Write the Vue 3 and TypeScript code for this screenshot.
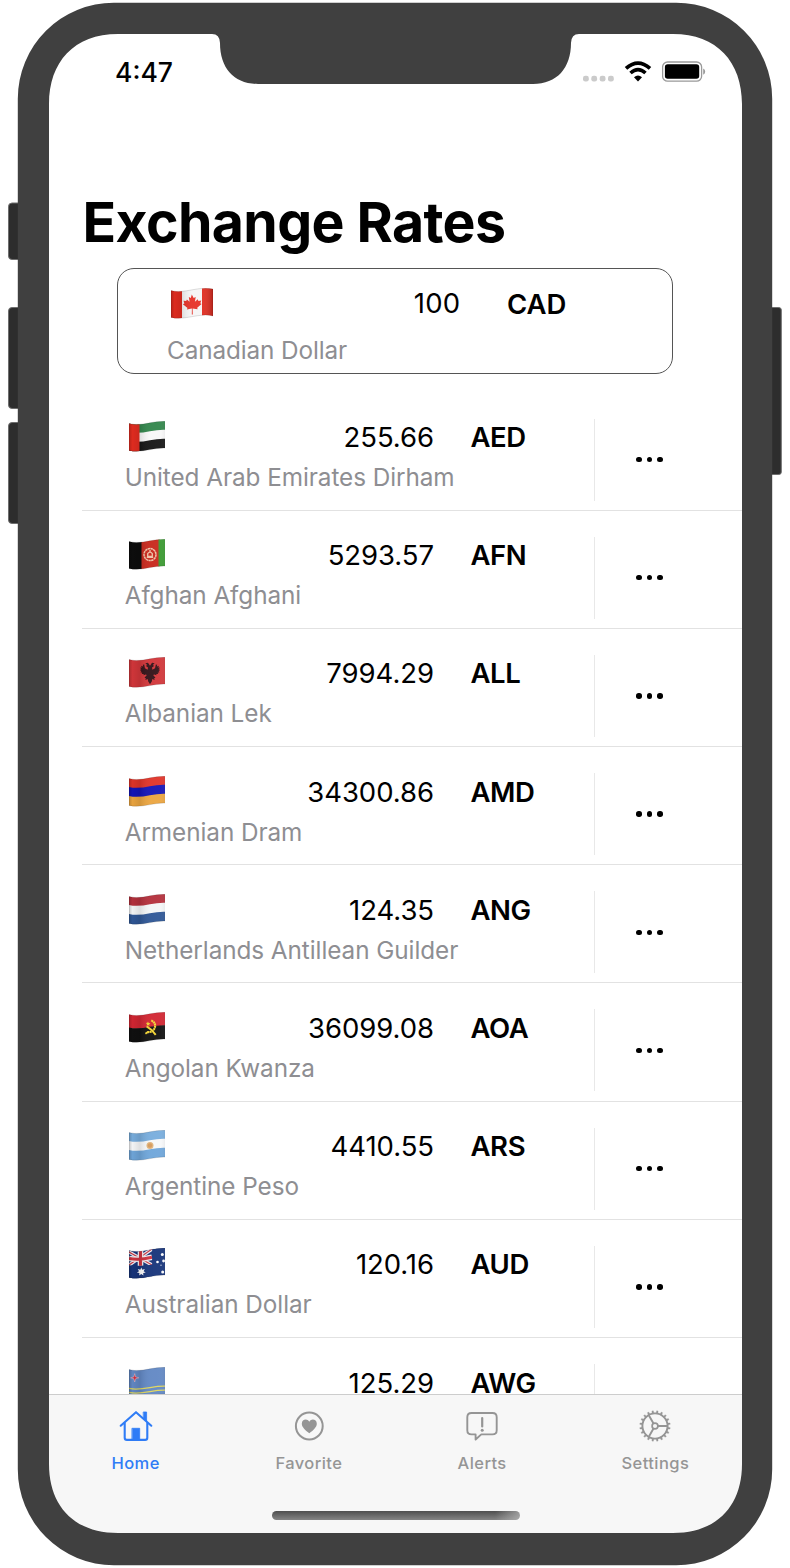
<script setup lang="ts">
interface Flag {
  bands?: [number, number, string][]
  columns?: [number, number, string][]
  emblem?: string
}
interface Rate {
  code: string
  name?: string
  amount: string
}

const flags: Record<string, Flag> = {
  CAD: { columns: [[0, 42, '#f6f6f6'], [0, 11, '#e02c20'], [31, 12, '#e02c20']], emblem: 'maple' },
  AED: { bands: [[0, 12, '#32864c'], [11, 21, '#f8f8f8'], [20, 33, '#161616']], columns: [[0, 10.5, '#e22c20']] },
  AFN: { columns: [[0, 13, '#0d0d0d'], [12.5, 18, '#c8281c'], [29.5, 13, '#3a9a30']], emblem: 'seal' },
  ALL: { columns: [[0, 43, '#d2363a']], emblem: 'eagle' },
  AMD: { bands: [[0, 12, '#e03429'], [11, 21, '#1414b8'], [20, 33, '#eba540']] },
  ANG: { bands: [[0, 12, '#b4303c'], [11, 21, '#f4f6f7'], [20, 33, '#2f5796']] },
  AOA: { bands: [[0, 16, '#d22632'], [15.5, 33, '#101010']], emblem: 'cog' },
  ARS: { bands: [[0, 12, '#78addd'], [11, 21, '#f7f8f9'], [20, 33, '#6fa6da']], emblem: 'sun' },
  AUD: { columns: [[0, 43, '#17347a']], emblem: 'union' },
  AWG: { columns: [[0, 43, '#6288c4']], emblem: 'aruba' },
}

const rates: Rate[] = [
  { code: 'AED', name: 'United Arab Emirates Dirham', amount: '255.66' },
  { code: 'AFN', name: 'Afghan Afghani', amount: '5293.57' },
  { code: 'ALL', name: 'Albanian Lek', amount: '7994.29' },
  { code: 'AMD', name: 'Armenian Dram', amount: '34300.86' },
  { code: 'ANG', name: 'Netherlands Antillean Guilder', amount: '124.35' },
  { code: 'AOA', name: 'Angolan Kwanza', amount: '36099.08' },
  { code: 'ARS', name: 'Argentine Peso', amount: '4410.55' },
  { code: 'AUD', name: 'Australian Dollar', amount: '120.16' },
  { code: 'AWG', amount: '125.29' },
]

const base: Rate = { code: 'CAD', name: 'Canadian Dollar', amount: '100' }

// A horizontal stripe whose edges follow the ripple of the cloth.
function ripple(top: number, bottom: number): string {
  return `M0 ${top}C14 ${top + 3.5} 28 ${top - 5} 42 ${top - 1.5}V${bottom - 1.5}C28 ${bottom - 5} 14 ${bottom + 3.5} 0 ${bottom}Z`
}

const teeth = Array.from({ length: 20 }, (_, i) => i * 18)
</script>

<template>
  <div class="device">
    <svg class="defs" width="0" height="0" aria-hidden="true">
      <defs>
        <clipPath id="cloth"><path :d="ripple(2.6, 29.4)" /></clipPath>
        <linearGradient id="shade" x1="0" x2="1" y1="0" y2="0">
          <stop offset="0" stop-color="#000" stop-opacity=".2" />
          <stop offset=".08" stop-color="#000" stop-opacity=".02" />
          <stop offset=".26" stop-color="#000" stop-opacity=".1" />
          <stop offset=".5" stop-color="#fff" stop-opacity=".04" />
          <stop offset=".75" stop-color="#fff" stop-opacity=".05" />
          <stop offset="1" stop-color="#000" stop-opacity=".2" />
        </linearGradient>
      </defs>
    </svg>

    <main class="screen">
      <div class="status">
        <span class="time">4:47</span>
        <div class="indicators">
          <svg class="signal" width="32" height="8" viewBox="0 0 32 8" fill="#cbcbcb">
            <rect x="1" y=".8" width="5.800" height="5.800" rx="2.300" /><rect x="9.300" y=".8" width="5.800" height="5.800" rx="2.300" />
            <rect x="17.700" y=".8" width="5.800" height="5.800" rx="2.300" /><rect x="26" y=".8" width="5.800" height="5.800" rx="2.300" />
          </svg>
          <svg class="wifi" width="28" height="22" viewBox="0 0 28 22">
            <path d="M2 7.400Q14-3.200 26 7.400" fill="none" stroke="#000" stroke-width="3.700" />
            <path d="M6.500 12Q14 5.300 21.500 12" fill="none" stroke="#000" stroke-width="3.600" />
            <path d="M10 16.200Q14 12.800 18 16.200L14 20.500Z" />
          </svg>
          <svg class="battery" width="45" height="22" viewBox="0 0 45 22">
            <rect x=".6" y="1" width="39" height="19.200" rx="5" fill="none" stroke="#999" stroke-width="1.300" />
            <rect x="2.900" y="3.200" width="34.300" height="14.600" rx="2.800" />
            <path d="M41.200 7.500v6.200q2-.9 2-3.100t-2-3.100" fill="#999" />
          </svg>
        </div>
      </div>

      <h1>Exchange Rates</h1>

      <section class="base">
        <div class="line">
          <svg class="flag" width="42" height="32" viewBox="0 0 42 32">
            <g clip-path="url(#cloth)">
              <rect v-for="(c, i) in flags.CAD.columns" :key="i" :x="c[0]" y="0" :width="c[1]" height="32" :fill="c[2]" />
              <path fill="#e63329" d="M20.800 6.500l1.900 3.500 2-.9-.8 4.700 2.900-2.500.6 1.600 2.900-.5-1 2.900 1.300.8-4.400 3.700.4 1.500-5-.9.2 6h-1l.1-6-5.100 1.100.7-1.600-4.600-3.600 1.500-.8-.9-2.800 2.700.3.700-1.500 2.700 2.300-.8-4.700 2 .9Z" />
              <rect width="42" height="32" fill="url(#shade)" />
            </g>
            <path :d="ripple(2.6, 29.4)" class="hem" />
          </svg>
          <span class="amount">{{ base.amount }}</span>
          <span class="code">{{ base.code }}</span>
        </div>
        <p class="name">{{ base.name }}</p>
      </section>

      <ul class="list">
        <li v-for="rate in rates" :key="rate.code" class="row">
          <div class="info">
            <div class="line">
              <svg class="flag" width="36" height="32" viewBox="0 0 36 32">
                <g clip-path="url(#cloth)">
                  <path v-for="(b, i) in flags[rate.code].bands" :key="'b' + i" :d="ripple(b[0] + (i ? 0 : -2), b[1])" :fill="b[2]" />
                  <rect v-for="(c, i) in flags[rate.code].columns" :key="'c' + i" :x="c[0]" y="0" :width="c[1]" height="32" :fill="c[2]" />
                  <g v-if="flags[rate.code].emblem === 'seal'" fill="none" stroke="#efc3a8">
                    <circle cx="21" cy="15.600" r="6" stroke-width="1.500" stroke-dasharray="2.400 .4" />
                    <path d="M17.800 18.400h6.400M18.700 17.400v-2.800q2.300-3 4.600 0v2.800ZM21 11v2" stroke-width="1.300" />
                  </g>
                  <path v-if="flags[rate.code].emblem === 'eagle'" fill="#331218" transform="translate(-2.520 -1.900) scale(1.120)" d="M21 9.600l-1.800-2.700-2.400.4 1.400 1.100-.6 1.500 1.600 1.200-.3 2-2.400-1.400-.7-3.300-1.200.3.300 1.500-2-.8.8 1.700-1.700.1 1.300 1.400-1.500.7 1.600 1-.9 1 1.700.5-.6 1.100 1.800-.1-.2 1.200 2-.6 1 .4-2.100 2.500 1.200.3-.5 1.700 2.200-1 .3 2 1.700 2.800 1.700-2.800.3-2 2.200 1-.5-1.700 1.200-.3-2.100-2.500 1-.4 2 .6-.2-1.200 1.800.1-.6-1.100 1.700-.5-.9-1 1.600-1-1.500-.7 1.300-1.400-1.700-.1.800-1.700-2 .8.300-1.500-1.200-.3-.7 3.300-2.400 1.400-.3-2 1.600-1.200-.6-1.500 1.400-1.100-2.400-.4Z" />
                  <g v-if="flags[rate.code].emblem === 'cog'" fill="none" stroke="#f2d433">
                    <path d="M22.300 8.400q5.200 2.800 3.400 7.700-2 4.600-7.700 3.900" stroke-width="2.100" stroke-dasharray="1.900 .4" />
                    <path d="M17.600 14.400q5.200 2.800 9.100 8.500M16.400 21.800l2.900-2" stroke-width="1.900" />
                    <path d="M19 9.400l.7 1.500 1.700.1-1.200 1.200.3 1.500-1.500-.8-1.300.8.300-1.600-1.300-1.200 1.700-.1Z" fill="#f2d433" stroke="none" />
                  </g>
                  <g v-if="flags[rate.code].emblem === 'sun'"><circle cx="21" cy="15.500" r="3.500" fill="#e0b47c" /><circle cx="21" cy="15.500" r="2.200" fill="#d69a5a" /></g>
                  <g v-if="flags[rate.code].emblem === 'union'">
                    <path d="M0 4l23 13M0 17L23 1" stroke="#f0eef2" stroke-width="3.400" />
                    <path d="M0 4l23 13M0 17L23 1" stroke="#c93946" stroke-width="1.100" />
                    <path d="M11.500 0v17.700M0 10.400q10 2 23-1.200" fill="none" stroke="#f3eff2" stroke-width="5.600" />
                    <path d="M11.500 0v17.700M0 10.400q10 2 23-1.200" fill="none" stroke="#ce3340" stroke-width="3" />
                    <path d="M0 17.200q10 2 23.300-.8V32H0Z" fill="#17347a" />
                    <path d="M23.200 0H42v20H23.200Z" fill="#17347a" />
                    <path fill="#fff" d="M12.300 19.400l1 2.300 2.500-.7-1.200 2.200 2.100 1.400-2.500.4.200 2.500-2.100-1.600-2.100 1.600.2-2.500-2.500-.4 2.100-1.400-1.200-2.200 2.500.7Z" />
                    <g fill="#fff"><circle cx="28.500" cy="14" r="1.300" /><circle cx="33.300" cy="6.400" r="1.500" /><circle cx="34.600" cy="13" r="1.400" /><circle cx="33.700" cy="24" r="1.500" /><circle cx="32" cy="17.200" r=".6" /></g>
                  </g>
                  <g v-if="flags[rate.code].emblem === 'aruba'">
                    <path d="M5.700 6.600l.9 3.300 3.300.9-3.300.9-.9 3.300-.9-3.300-3.300-.9 3.300-.9Z" fill="#d42b3c" stroke="#e7cbd7" stroke-width=".5" />
                    <path d="M0 21.400C14 24.900 28 16.400 42 19.900M0 25.400C14 28.900 28 20.400 42 23.900" fill="none" stroke="#dfd65e" stroke-width="1.300" />
                  </g>
                  <rect width="42" height="32" fill="url(#shade)" />
                </g>
                <path :d="ripple(2.6, 29.4)" class="hem" />
              </svg>
              <span class="amount">{{ rate.amount }}</span>
              <span class="code">{{ rate.code }}</span>
            </div>
            <p v-if="rate.name" class="name">{{ rate.name }}</p>
          </div>
          <button class="more" :aria-label="rate.code"><i /><i /><i /></button>
        </li>
      </ul>

      <nav class="tabs">
        <a class="tab active">
          <svg width="36" height="34" viewBox="0 0 36 34" fill="none" stroke="currentColor" stroke-width="2.100" stroke-linejoin="round" stroke-linecap="round">
            <path d="M2.700 16.700L18 3.200l15.300 13.500" /><path d="M6.700 14v14.700q0 2.200 2.200 2.200h18.200q2.200 0 2.200-2.200V14" />
            <path d="M14.300 19.300h7.400v11.700h-7.400ZM25.600 3h3v9.200l-3-2.700Z" fill="currentColor" stroke-width=".8" />
          </svg>
          <span>Home</span>
        </a>
        <a class="tab">
          <svg width="36" height="34" viewBox="0 0 36 34">
            <circle cx="18.300" cy="17" r="13.400" fill="none" stroke="currentColor" stroke-width="2" />
            <path fill="currentColor" d="M18.300 24.200C14 21 10.800 18 10.800 14.700c0-4.400 5.400-5.600 7.500-2 2.100-3.600 7.500-2.400 7.500 2 0 3.300-3.200 6.300-7.500 9.500Z" />
          </svg>
          <span>Favorite</span>
        </a>
        <a class="tab">
          <svg width="36" height="34" viewBox="0 0 36 34" fill="none" stroke="currentColor" stroke-width="1.900" stroke-linejoin="round">
            <path d="M7.500 4h21q4.200 0 4.200 4.200v13q0 4.200-4.200 4.200H17.300L11.600 30.500v-5.100H7.500q-4.200 0-4.200-4.200v-13Q3.300 4 7.500 4Z" />
            <path d="M18.200 9.100v8.400" stroke-width="2.200" stroke-linecap="round" /><circle cx="18.200" cy="21.200" r="1.500" fill="currentColor" stroke="none" />
          </svg>
          <span>Alerts</span>
        </a>
        <a class="tab">
          <svg width="36" height="34" viewBox="0 0 36 34" fill="none" stroke="currentColor" stroke-width="1.900">
            <circle cx="18" cy="17" r="12.600" /><circle cx="18" cy="17" r="2.900" stroke-width="1.700" />
            <path d="M20.900 17h9.500M16.500 14.500L11.800 6.300M16.500 19.500L11.800 27.700" />
            <path v-for="a in teeth" :key="a" d="M17 4.500L17.300 1.700h1.400L19 4.500Z" :transform="`rotate(${a + 9} 18 17)`" fill="currentColor" stroke-width=".3" />
          </svg>
          <span>Settings</span>
        </a>
        <div class="grabber" />
      </nav>
    </main>

    <svg class="shell" width="790" height="1568" viewBox="0 0 790 1568">
      <g fill="#2d2d2d" stroke="#6e6e6e" stroke-width="1">
        <rect x="8.500" y="203" width="16" height="56.500" rx="3.500" />
        <rect x="8.500" y="307.500" width="16" height="101" rx="3.500" />
        <rect x="8.500" y="422.500" width="16" height="101" rx="3.500" />
        <rect x="765" y="307.500" width="16.300" height="167" rx="2.500" />
      </g>
      <path fill="#404040" fill-rule="evenodd" d="M114 2.700H676A96 96 0 0 1 772.200 98.700V1469A96 96 0 0 1 676 1565.200H114A96 96 0 0 1 17.800 1469V98.700A96 96 0 0 1 114 2.700Z
        M118 34C74 34 49 62 49 104V1464C49 1506 74 1533 118 1533H673C717 1533 742 1506 742 1464V104C742 62 717 34 673 34H579Q571.300 34 571 43C571 68 557 84 533 84H258C234 84 220 68 220 43Q219.700 34 212 34Z" />
    </svg>
  </div>
</template>

<style scoped>
.device { position: relative; width: 790px; height: 1568px; overflow: hidden; background: #fff; color: #000; font-family: Inter, "Liberation Sans", sans-serif; }
.defs, .shell { position: absolute; top: 0; left: 0; pointer-events: none; }
.screen { display: flex; flex-direction: column; width: 693px; height: 1499px; margin: 34px 0 0 49px; overflow: hidden; }
.status { display: flex; justify-content: space-between; height: 154.5px; padding: 22px 35px 0 66px; box-sizing: border-box; flex: none; }
.time { font-size: 26.5px; line-height: 32px; font-weight: 500; letter-spacing: 0; }
.indicators { display: flex; align-items: flex-start; padding-top: 4.5px; }
.signal { margin: 14px 10px 0 0; }
.wifi { margin-right: 10px; }
.battery { display: block; }
h1 { flex: none; margin: 0 0 13px 33.5px; font-size: 55.4px; line-height: 66px; font-weight: 700; letter-spacing: -.62px; white-space: nowrap; }
.base { width: 556px; height: 106px; margin: 0 0 19px 68px; padding: 19px 0 0 49px; border: 1.3px solid #555; border-radius: 17px; box-sizing: border-box; flex: none; }
.line { display: flex; align-items: flex-start; height: 32px; }
.flag { display: block; flex: none; margin-left: 4px; overflow: hidden; }
.base .flag { margin-left: 3.5px; }
.hem { fill: none; stroke: #000; stroke-opacity: .16; stroke-width: .8; }
.amount { flex: 1; text-align: right; font-size: 27.5px; line-height: 32px; letter-spacing: -.05px; }
.code { font-size: 27.5px; line-height: 32px; font-weight: 600; letter-spacing: -.4px; }
.name { margin: 9px 0 0; font-size: 24.3px; line-height: 30px; letter-spacing: -.06px; color: #8e8e92; white-space: nowrap; }
.base .amount { margin-top: -1px; letter-spacing: .3px; }
.base .code { width: 166px; padding-left: 46.5px; box-sizing: border-box; letter-spacing: -.1px; }
.base .line { padding-right: 45.5px; }
.base .name { margin-top: 15px; letter-spacing: -.1px; }
.list { display: block; flex: 1; min-height: 0; overflow: hidden; margin: 0; padding: 0 0 0 33px; list-style: none; }
.row { display: flex; height: 118.2px; box-sizing: border-box; border-bottom: 1.5px solid #e2e2e2; }
.info { width: 512px; flex: none; padding: 28.5px 0 0 42.7px; box-sizing: border-box; }
.row .code { width: 160px; padding-left: 36.5px; box-sizing: border-box; }
.more { display: flex; align-items: center; gap: 5px; height: 82px; width: 120px; margin: 26px 0 0; padding: 0 0 0 41px; border: 0; border-left: 1.5px solid #e8e8e8; background: none; }
.more i { width: 5.5px; height: 5.5px; border-radius: 50%; background: #000; }
.tabs { position: relative; display: flex; flex: none; height: 139.5px; box-sizing: border-box; border-top: 1.5px solid #cdcdcd; background: #f7f7f7; color: #959595; }
.tab { display: flex; flex-direction: column; align-items: center; flex: 1; padding-top: 14px; font-size: 16.5px; line-height: 20px; font-weight: 500; letter-spacing: .42px; }
.tab svg { display: block; margin-bottom: 10.5px; }
.tab.active { color: #2f7cf6; }
.grabber { position: absolute; left: 222.5px; top: 116.5px; width: 248px; height: 8.5px; border-radius: 5px; background: linear-gradient(90deg, transparent 90%, rgba(190, 190, 190, .65)), linear-gradient(#4e4e4e, #858585); }
</style>

<style>
body { margin: 0; background: #fff; }
</style>
